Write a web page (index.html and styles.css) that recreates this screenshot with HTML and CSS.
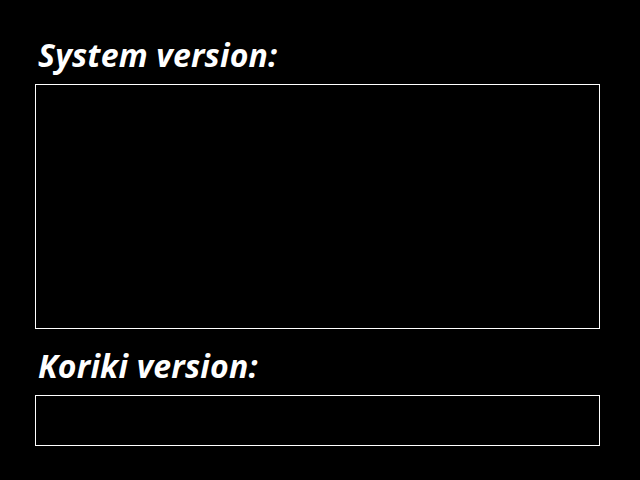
FILE: index.html
```html
<!DOCTYPE html>
<html>
<head>
<meta charset="utf-8">
<link rel="stylesheet" href="styles.css">
</head>
<body>
<main class="page">
  <section class="group">
    <h2 class="label">System version:</h2>
    <div class="box box-large"></div>
  </section>
  <section class="group">
    <h2 class="label">Koriki version:</h2>
    <div class="box box-small"></div>
  </section>
</main>
</body>
</html>
```
FILE: styles.css
```css
html, body {
  margin: 0;
  padding: 0;
  background: #000;
  width: 640px;
  height: 480px;
  overflow: hidden;
}
.page {
  display: flex;
  flex-direction: column;
  padding: 34px 40px 0 35px;
  gap: 16px;
}
.group {
  display: flex;
  flex-direction: column;
}
.label {
  margin: 0 0 8px 3px;
  font-family: "Open Sans", "Noto Sans", sans-serif;
  font-weight: 700;
  font-style: italic;
  font-size: 32px;
  line-height: 42px;
  color: #fff;
  letter-spacing: 0.2px;
}
.box {
  border: 1px solid #fff;
  box-sizing: border-box;
  width: 565px;
}
.box-large { height: 245px; }
.box-small { height: 51px; }
```
